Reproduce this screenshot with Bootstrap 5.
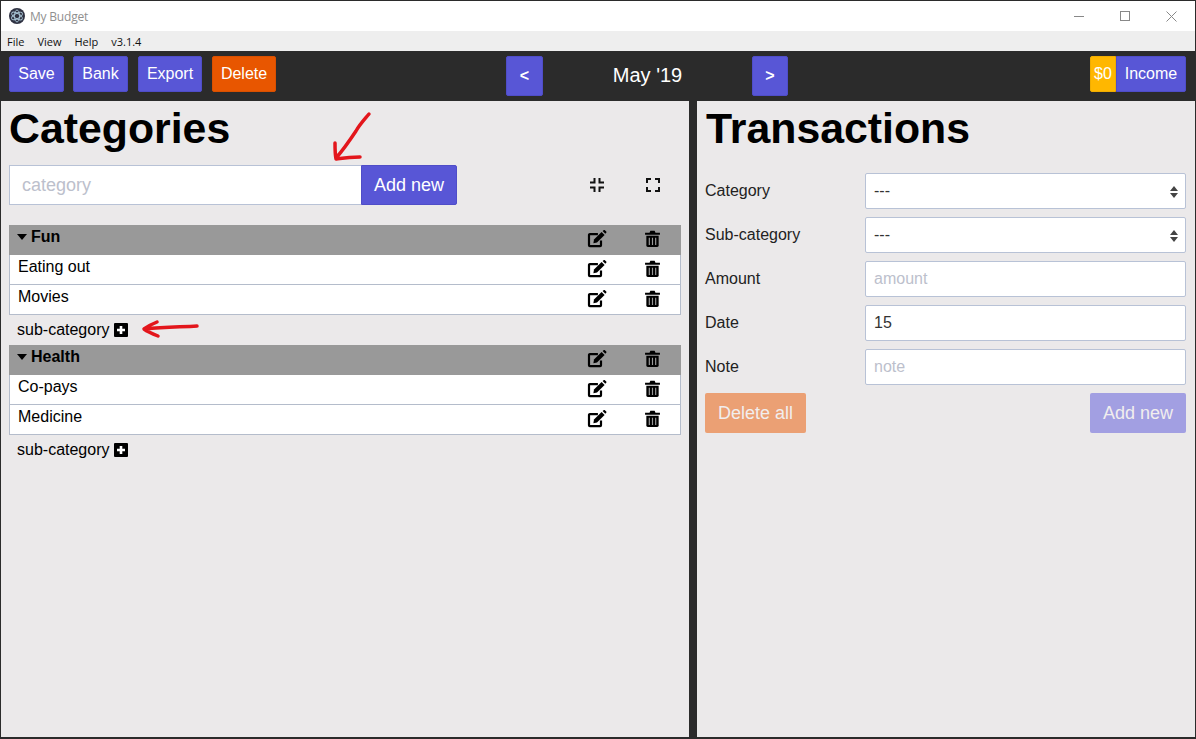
<!DOCTYPE html>
<html lang="en">
<head>
<meta charset="utf-8">
<title>My Budget</title>
<link rel="stylesheet" href="https://cdn.jsdelivr.net/npm/bootstrap@5.3.0/dist/css/bootstrap.min.css">
<style>
html,body{height:739px;overflow:hidden}
body{background:#2b2b2b;font-family:"Liberation Sans",Arial,sans-serif;color:#000;padding:1px 1px 2px 1px;position:relative}
.win{height:736px;display:flex;flex-direction:column}
.titlebar{height:30px;background:#fff;color:#8f8f8f;font:12px "Open Sans","Noto Sans",sans-serif;padding-left:8px}
.wintext{letter-spacing:-.2px;margin-left:1px}
.winbtns{padding-right:1px}
.winbtn{width:46px;height:30px;display:flex;align-items:center;justify-content:center}
.menubar{height:20px;background:#eee;font:11px "Open Sans","Noto Sans",sans-serif;color:#111;padding-left:6px;gap:13px}
.toolbar{height:50px;background:#2b2b2b;padding:5px 9px 5px 8px}
.tbtn{height:36px;background:#5856d6;border:1px solid #4f4dc8;border-radius:2px;color:#fff;font-size:16px;padding:0;display:flex;align-items:center;justify-content:center}
.tbtn-del{background:#e85600;border-color:#d95000}
.tbtn-coin{background:#ffb700;border-color:#f0ac00;width:26px;border-radius:2px 0 0 2px}
.tbtn-inc{border-radius:0 2px 2px 0;width:70px}
.tbtn-nav{height:40px;font-weight:700}
.tbtn-save,.tbtn-bank{width:55px}
.tbtn-wide{width:64px;margin-left:1px}
.tbtn-prev{width:37px}
.tbtn-next{width:36px}
.leftbtns{width:497px;gap:9px}
.monthtitle{width:209px;height:38px;display:flex;align-items:center;justify-content:center;color:#fff;font-size:20px}
.panels{flex:1;display:flex;gap:8px;min-height:0}
.leftp{width:688px;background:#ebe9ea;padding:0 8px}
.rightp{flex:1;background:#ebe9ea;padding:0 9px 0 8px}
.bigh{font-size:42.8px;font-weight:700;line-height:52px;margin:1px 0 0;color:#000}
.rightp .bigh{margin-left:1px}
.addrow{margin-top:11px;height:40px;width:672px}
.catinput{width:352px;height:40px;border:1px solid #b8c2d6;border-right:0;background:#fff;color:#bcc0cc;font-size:18px;padding:0 12px;display:flex;align-items:center}
.addbtn{width:96px;height:40px;background:#5856d6;border:1px solid #4f4dc8;border-radius:0 2px 2px 0;color:#fff;font-size:18px;padding:0;text-align:center}
.icocell{width:55px;display:flex;justify-content:center}
.icocell-wide{width:56px}
.addicons{margin-left:auto;margin-right:1px}
.catlist{margin-top:20px;width:672px}
.cathead{height:30px;background:#999;font-weight:700;font-size:16px;padding-left:8px;padding-bottom:7px}
.subitem{height:30px;background:#fff;border:1px solid #b4bccb;border-top:0;font-size:16px;padding-left:8px;padding-bottom:6px}
.subadd{height:30px;font-size:16px;padding-left:8px;gap:4px}
.rowact{margin-left:auto;align-self:center;padding-top:5px}
.cathead .rowact{margin-right:1px;padding-top:5px}
.frow{height:36px;margin-bottom:8px}
.flabel{width:160px;font-size:16px;color:#222}
.finput{flex:1;height:36px;background:#fff;border:1px solid #b8c2d6;border-radius:2px;font-size:16px;color:#333;padding:0 8px;position:relative}
.ph{color:#bcc0cc}
.formwrap{padding-top:19px}
.selarrows{position:absolute;right:7px;top:12px}
.fbtn{height:40px;border-radius:2px;color:#f1eeee;font-size:18px;display:flex;align-items:center;justify-content:center;border:0}
.fbtn-del{width:101px;background:#eba074}
.fbtn-add{width:96px;background:#a29fe2}
.marks{position:absolute;left:0;top:0;pointer-events:none}
</style>
</head>
<body>
<svg width="0" height="0" class="position-absolute">
<defs>
<symbol id="ed" viewBox="0 0 20 18"><path d="M14 10.400V15.200a.9.9 0 0 1-.9.9H2.900a.9.9 0 0 1-.9-.9V5a.9.9 0 0 1 .9-.9h8" fill="none" stroke="currentColor" stroke-width="2.200"/><path d="M7 9.600l7.600-7.600 3 3-7.600 7.600-3.600.6z" fill="currentColor"/><path d="M15.600 1l1-.8a1 1 0 0 1 1.300 0l1.300 1.300a1 1 0 0 1 0 1.300l-.9 1z" fill="currentColor"/></symbol>
<symbol id="tr" viewBox="0 0 14 16"><path d="M0 2.500h4.200L5 .6h4l.8 1.900H14v2H0z" fill="currentColor"/><path d="M1.200 5.400h11.600v9.200a1.400 1.400 0 0 1-1.400 1.400H2.600a1.400 1.400 0 0 1-1.400-1.400z" fill="currentColor"/><path d="M4 7.200v6.800M7 7.200v6.800M10 7.200v6.800" stroke="#fff" stroke-width="1.100" opacity=".6"/></symbol>
</defs>
</svg>
<div class="win">
  <div class="titlebar d-flex align-items-center">
    <svg width="16" height="16" viewBox="0 0 16 16" class="me-1"><circle cx="8" cy="8" r="8" fill="#2f3242"/><g fill="none" stroke="#a9c5d6" stroke-width=".9"><ellipse cx="8" cy="8" rx="6" ry="2.600" transform="rotate(30 8 8)"/><ellipse cx="8" cy="8" rx="6" ry="2.600" transform="rotate(-30 8 8)"/><ellipse cx="8" cy="8" rx="2.600" ry="6"/></g></svg>
    <span class="wintext">My Budget</span>
    <div class="ms-auto d-flex winbtns">
      <div class="winbtn"><svg width="11" height="11"><path d="M0 5.500h10" stroke="#888"/></svg></div>
      <div class="winbtn"><svg width="11" height="11"><rect x=".5" y=".5" width="9" height="9" fill="none" stroke="#888"/></svg></div>
      <div class="winbtn"><svg width="11" height="11"><path d="M.5.500l10 10M10.500.500l-10 10" stroke="#888"/></svg></div>
    </div>
  </div>
  <div class="menubar d-flex align-items-center"><span>File</span><span>View</span><span>Help</span><span>v3.1.4</span></div>
  <div class="toolbar d-flex align-items-start">
    <div class="d-flex leftbtns flex-shrink-0">
      <button class="tbtn tbtn-save">Save</button>
      <button class="tbtn tbtn-bank">Bank</button>
      <button class="tbtn tbtn-wide">Export</button>
      <button class="tbtn tbtn-del tbtn-wide">Delete</button>
    </div>
    <button class="tbtn tbtn-nav tbtn-prev">&lt;</button>
    <div class="monthtitle">May '19</div>
    <button class="tbtn tbtn-nav tbtn-next">&gt;</button>
    <div class="ms-auto d-flex">
      <div class="tbtn tbtn-coin">$0</div>
      <button class="tbtn tbtn-inc">Income</button>
    </div>
  </div>
  <div class="panels">
    <section class="leftp">
      <h1 class="bigh">Categories</h1>
      <div class="addrow d-flex align-items-center">
        <div class="catinput">category</div>
        <button class="addbtn">Add new</button>
        <div class="addicons d-flex">
          <div class="icocell icocell-wide"><svg width="14" height="14" viewBox="0 0 14 14"><path d="M4.500 0v4.500H0M9.500 0v4.500H14M4.500 14V9.500H0M9.500 14V9.500H14" fill="none" stroke="#111" stroke-width="2"/></svg></div>
          <div class="icocell"><svg width="14" height="14" viewBox="0 0 14 14"><path d="M1 5V1h4M13 5V1H9M1 9v4h4M13 9v4H9" fill="none" stroke="#111" stroke-width="2"/></svg></div>
        </div>
      </div>
      <div class="catlist">
        <div class="cathead d-flex align-items-center"><svg width="10" height="6" viewBox="0 0 10 6" class="me-1"><path d="M0 0h10L5 6z"/></svg>Fun
          <div class="rowact d-flex"><div class="icocell icocell-wide"><svg width="20" height="18"><use href="#ed"/></svg></div><div class="icocell"><svg width="15" height="17"><use href="#tr"/></svg></div></div></div>
        <div class="subitem d-flex align-items-center">Eating out
          <div class="rowact d-flex"><div class="icocell icocell-wide"><svg width="20" height="18"><use href="#ed"/></svg></div><div class="icocell"><svg width="15" height="17"><use href="#tr"/></svg></div></div></div>
        <div class="subitem d-flex align-items-center">Movies
          <div class="rowact d-flex"><div class="icocell icocell-wide"><svg width="20" height="18"><use href="#ed"/></svg></div><div class="icocell"><svg width="15" height="17"><use href="#tr"/></svg></div></div></div>
        <div class="subadd d-flex align-items-center">sub-category <svg width="14" height="14" viewBox="0 0 14 14"><rect width="14" height="14" rx="1"/><path d="M7 3v8M3 7h8" stroke="#fff" stroke-width="2.600"/></svg></div>
        <div class="cathead d-flex align-items-center"><svg width="10" height="6" viewBox="0 0 10 6" class="me-1"><path d="M0 0h10L5 6z"/></svg>Health
          <div class="rowact d-flex"><div class="icocell icocell-wide"><svg width="20" height="18"><use href="#ed"/></svg></div><div class="icocell"><svg width="15" height="17"><use href="#tr"/></svg></div></div></div>
        <div class="subitem d-flex align-items-center">Co-pays
          <div class="rowact d-flex"><div class="icocell icocell-wide"><svg width="20" height="18"><use href="#ed"/></svg></div><div class="icocell"><svg width="15" height="17"><use href="#tr"/></svg></div></div></div>
        <div class="subitem d-flex align-items-center">Medicine
          <div class="rowact d-flex"><div class="icocell icocell-wide"><svg width="20" height="18"><use href="#ed"/></svg></div><div class="icocell"><svg width="15" height="17"><use href="#tr"/></svg></div></div></div>
        <div class="subadd d-flex align-items-center">sub-category <svg width="14" height="14" viewBox="0 0 14 14"><rect width="14" height="14" rx="1"/><path d="M7 3v8M3 7h8" stroke="#fff" stroke-width="2.600"/></svg></div>
      </div>
    </section>
    <section class="rightp">
      <h1 class="bigh">Transactions</h1>
      <div class="formwrap">
        <div class="frow d-flex align-items-center"><div class="flabel">Category</div><div class="finput d-flex align-items-center">---<svg class="selarrows" width="8" height="12" viewBox="0 0 8 12"><path d="M4 0l4 5H0zM4 12l4-5H0z" fill="#444"/></svg></div></div>
        <div class="frow d-flex align-items-center"><div class="flabel">Sub-category</div><div class="finput d-flex align-items-center">---<svg class="selarrows" width="8" height="12" viewBox="0 0 8 12"><path d="M4 0l4 5H0zM4 12l4-5H0z" fill="#444"/></svg></div></div>
        <div class="frow d-flex align-items-center"><div class="flabel">Amount</div><div class="finput d-flex align-items-center ph">amount</div></div>
        <div class="frow d-flex align-items-center"><div class="flabel">Date</div><div class="finput d-flex align-items-center">15</div></div>
        <div class="frow d-flex align-items-center"><div class="flabel">Note</div><div class="finput d-flex align-items-center ph">note</div></div>
        <div class="d-flex justify-content-between">
          <button class="fbtn fbtn-del">Delete all</button>
          <button class="fbtn fbtn-add">Add new</button>
        </div>
      </div>
    </section>
  </div>
</div>
<svg class="marks" width="1196" height="739" viewBox="0 0 1196 739" fill="none" stroke="#e3161c" stroke-linecap="round" stroke-linejoin="round" stroke-width="3.500">
  <path d="M369 114c-5 6-9 10-13 17-6 9-12 18-20 27M335 143c0 5 0 11 1 16 7-1 13-2 24-2"/>
  <path d="M197 326c-15 1-32 1-52 3M157 322c-5 2-9 4-13 7 4 3 9 5 14 7"/>
</svg>
</body>
</html>
